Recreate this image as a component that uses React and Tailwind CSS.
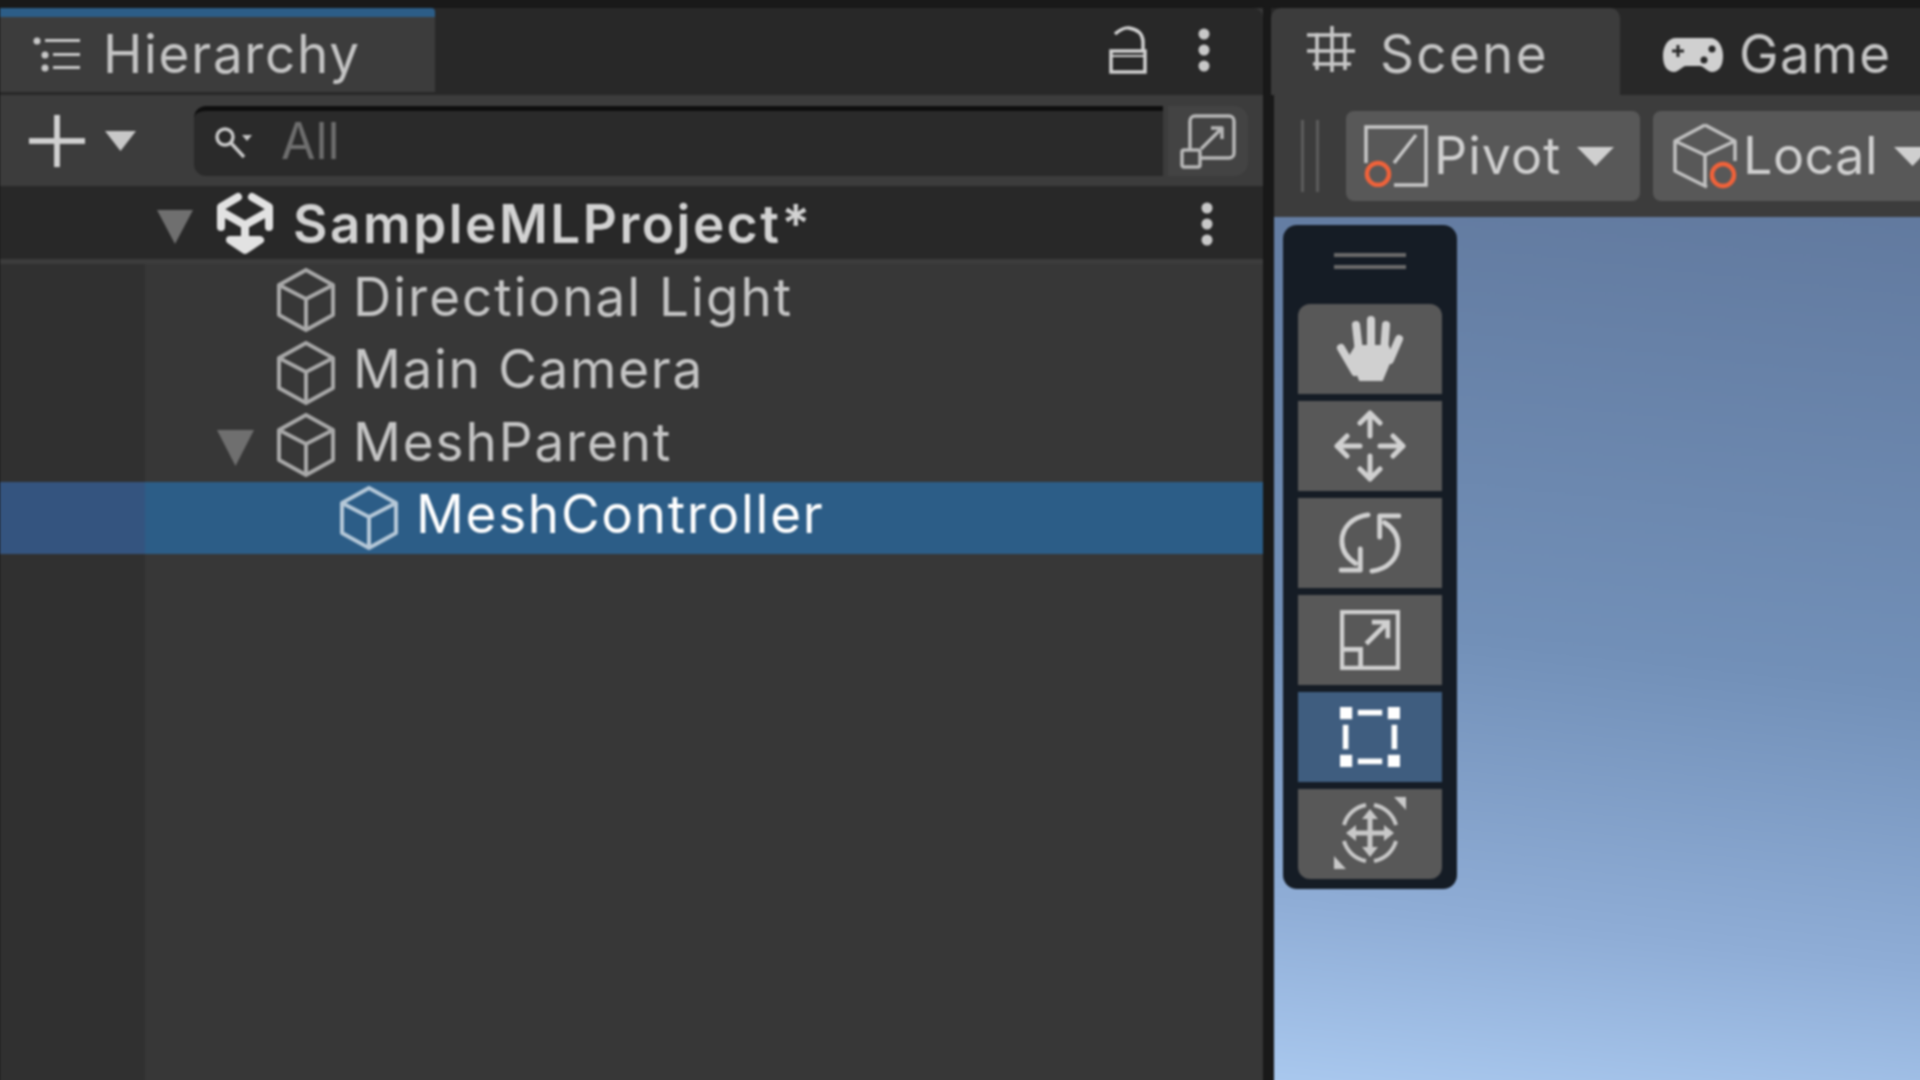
import React from "react";

const font = { fontFamily: "Inter, 'Noto Sans', sans-serif" };

const Triangle = ({ className }) => (
  <svg viewBox="0 0 30 28" preserveAspectRatio="none" className={className} fill="currentColor">
    <path d="M0 0H30L15 28Z" />
  </svg>
);

const Kebab = ({ className }) => (
  <svg viewBox="0 0 14 44" className={className} fill="#c8c8c8">
    <circle cx="7" cy="6" r="5.5" />
    <circle cx="7" cy="22" r="5.5" />
    <circle cx="7" cy="38" r="5.5" />
  </svg>
);

const Cube = ({ stroke = "#a8a8a8" }) => (
  <svg viewBox="0 0 60 64" className="w-[60px] h-[64px] shrink-0" fill="none" stroke={stroke} strokeWidth="4" strokeLinejoin="round">
    <path d="M30 2L57 17V47L30 62L3 47V17Z" />
    <path d="M3 17L30 31L57 17M30 31V62" />
  </svg>
);

const UnityLogo = () => (
  <svg viewBox="12 6 56 64" className="w-[56px] h-[64px]" fill="none" stroke="#e2e2e2" strokeWidth="8" strokeLinejoin="round" strokeLinecap="round">
    <path d="M33 11L16 21V41" />
    <path d="M47 11L64 21V41" />
    <path d="M19 27L40 39L61 27" />
    <path d="M40 39V62" />
    <path d="M25 54L40 64L55 54Z" fill="#e2e2e2" />
  </svg>
);

const Row = ({ label, pad, arrow, selected, spacing = "tracking-[1.7px]" }) => (
  <div className={`flex h-[72.5px] ${selected ? "bg-[#2c5d87]" : "bg-[#373737]"}`}>
    <div className={`w-[145px] shrink-0 ${selected ? "bg-[#34547f]" : "bg-[#303030]"}`} />
    <div className={`flex items-center ${pad}`}>
      {arrow && <Triangle className="w-[37px] h-[36px] mr-[22px] mt-[6px] text-[#6f6f6f]" />}
      <Cube stroke={selected ? "#b5c8d8" : "#a8a8a8"} />
      <span className={`ml-[17px] mb-[6px] text-[53px] ${spacing} ${selected ? "text-white" : "text-[#c4c4c4]"}`}>{label}</span>
    </div>
  </div>
);

const ToolButton = ({ children, active, first, last }) => (
  <div
    className={`h-[90px] flex items-center justify-center ${active ? "bg-[#3f5d7f]" : "bg-[#585858]"} ${first ? "rounded-t-[12px]" : ""} ${last ? "rounded-b-[12px]" : ""}`}
  >
    {children}
  </div>
);

const toolIcon = { fill: "none", stroke: "#d0d0d0", strokeWidth: 5, strokeLinecap: "round", strokeLinejoin: "round" };

export default function App() {
  return (
    <div className="w-[1920px] h-[1080px] overflow-hidden bg-[#191919]">
      {/* soft upscaled look, oversized so the blur doesn't fade at the right and bottom edges */}
      <div className="w-[1928px] h-[1088px] pt-2 flex gap-2 text-[#c4c4c4] blur-[1px]" style={font}>
        {/* Hierarchy panel */}
        <div className="w-[1263px] shrink-0 flex flex-col bg-[#373737]">
          <div className="h-[87px] shrink-0 flex items-start bg-[#282828] rounded-tr-[10px]">
            <div className="w-[435px] h-[84px] bg-[#3c3c3c] border-t-[9px] border-[#2c5d87] flex items-center pl-[33px] rounded-tr-[4px]">
              <svg viewBox="0 0 48 36" className="w-[48px] h-[36px]" fill="#c8c8c8">
                <circle cx="4" cy="4" r="3.5" />
                <circle cx="12" cy="18" r="3.5" />
                <circle cx="12" cy="31" r="3.5" />
                <rect x="12" y="2" width="35" height="3" />
                <rect x="20" y="16" width="27" height="3" />
                <rect x="20" y="29" width="27" height="3" />
              </svg>
              <span className="ml-[22px] text-[53px] tracking-[1.7px]">Hierarchy</span>
            </div>
            <div className="ml-auto h-[84px] flex items-center pr-[52px] gap-[50px]">
              <svg viewBox="0 0 38 48" className="w-[38px] h-[48px]" fill="none" stroke="#d0d0d0" strokeWidth="3.5">
                <rect x="2" y="25" width="34" height="21" />
                <path d="M2 30H36" strokeWidth="2" />
                <path d="M6 8Q14 1 20 2Q33 4 34 15V25" />
              </svg>
              <Kebab className="w-[14px] h-[44px]" />
            </div>
          </div>

          <div className="h-[91px] shrink-0 bg-[#3c3c3c] flex items-center">
            <div className="flex items-center pl-[29px] w-[194px] shrink-0">
              <svg viewBox="0 0 58 54" className="w-[56px] h-[54px]" fill="#d0d0d0">
                <rect x="0" y="24" width="58" height="6" />
                <rect x="26" y="0" width="6" height="54" />
              </svg>
              <Triangle className="ml-[20px] w-[31px] h-[20px] text-[#c8c8c8]" />
            </div>
            <div className="w-[969px] h-[70px] bg-[#2a2a2a] border-t-[5px] border-[#0e0e0e] rounded-l-[12px] flex items-center pl-[20px]">
              <svg viewBox="0 0 40 36" className="w-[40px] h-[36px]" fill="none" stroke="#c8c8c8" strokeWidth="3.5">
                <circle cx="11" cy="12" r="8" />
                <path d="M17 18L30 32" />
                <path d="M28 10H38L33 16Z" fill="#c8c8c8" stroke="none" />
              </svg>
              <span className="ml-[27px] mb-[3px] text-[50px] text-[#6e6e6e]">All</span>
            </div>
            <div className="ml-[5px] w-[80px] h-[70px] bg-[#434343] rounded-r-[14px] flex items-center justify-center">
              <svg viewBox="0 0 56 56" className="w-[56px] h-[56px]" fill="none" stroke="#b8b8b8" strokeWidth="3.5" strokeLinejoin="round">
                <path d="M10 36V8A5 5 0 0 1 15 3H49A5 5 0 0 1 54 8V40A5 5 0 0 1 49 45H21" />
                <rect x="2" y="37" width="18" height="17" rx="2" />
                <path d="M21 36L42 15M31 15H42V26" />
              </svg>
            </div>
          </div>

          <div className="h-[78px] shrink-0 bg-[#282828] flex items-center pt-[3px] border-b-[5px] border-[#3c3c3c]">
            <Triangle className="ml-[157px] w-[36px] h-[34px] mt-[6px] text-[#6f6f6f]" />
            <div className="ml-[24px]">
              <UnityLogo />
            </div>
            <span className="ml-[20px] mt-[2px] text-[53px] font-semibold tracking-[2.5px] text-[#d2d2d2]">SampleMLProject*</span>
            <div className="ml-auto pr-[49px] flex items-center">
              <Kebab className="w-[14px] h-[44px]" />
            </div>
          </div>

          <Row label="Directional Light" pad="pl-[131px]" spacing="tracking-[2px]" />
          <Row label="Main Camera" pad="pl-[131px]" />
          <Row label="MeshParent" pad="pl-[72px]" arrow spacing="tracking-[1.9px]" />
          <Row label="MeshController" pad="pl-[194px]" selected />

          <div className="flex-1 flex">
            <div className="w-[145px] bg-[#303030]" />
          </div>
        </div>

        {/* Scene panel */}
        <div className="flex-1 min-w-0 flex flex-col">
          <div className="h-[87px] shrink-0 flex bg-[#282828]">
            <div className="w-[349px] bg-[#3c3c3c] rounded-t-[10px] flex items-center pt-[7px] pl-[24px]">
              <svg viewBox="0 0 70 70" className="w-[70px] h-[70px]" fill="none" stroke="#c8c8c8" strokeWidth="3.5">
                <path d="M22 13V50M37 6V52M50 13V50M12 15H56M12 31H60M18 44H56" />
              </svg>
              <span className="ml-[15px] text-[53px] tracking-[2.3px]">Scene</span>
            </div>
            <div className="flex items-center pt-[7px] pl-[42px] whitespace-nowrap">
              <svg viewBox="0 0 62 38" className="w-[62px] h-[38px]">
                <path d="M14 2H48C56 2 61 10 61 20C61 31 56 36 50 36C45 36 42 30 38 30H24C20 30 17 36 12 36C6 36 1 31 1 20C1 10 6 2 14 2Z" fill="#d0d0d0" />
                <path d="M16 9V21M10 15H22" stroke="#282828" strokeWidth="3" fill="none" />
                <circle cx="42" cy="24" r="3.5" fill="#282828" />
                <circle cx="50" cy="13" r="3.5" fill="#282828" />
              </svg>
              <span className="ml-[15px] text-[53px] tracking-[1.5px]">Game</span>
            </div>
          </div>

          <div className="ml-[3px] h-[122px] shrink-0 bg-[#3c3c3c] flex items-center pl-[27px]">
            <div className="flex gap-[12px] w-[18px] h-[72px] shrink-0">
              <div className="w-[3px] bg-[#5c5c5c]" />
              <div className="w-[3px] bg-[#5c5c5c]" />
            </div>
            <div className="ml-[27px] w-[294px] h-[90px] shrink-0 bg-[#585858] rounded-[8px] flex items-center pl-[18px]">
              <svg viewBox="0 0 64 62" className="w-[64px] h-[62px] shrink-0" fill="none" stroke="#c8c8c8" strokeWidth="3.5">
                <path d="M2 38V2H62V60H30" />
                <path d="M30 38L52 10" />
                <ellipse cx="14" cy="49" rx="11" ry="11" stroke="#f0623a" strokeWidth="4.5" />
              </svg>
              <span className="ml-[6px] text-[52px] tracking-[1px] text-[#cfcfcf]">Pivot</span>
              <Triangle className="ml-[16px] w-[37px] h-[19px] text-[#cfcfcf]" />
            </div>
            <div className="ml-[13px] w-[320px] h-[90px] shrink-0 bg-[#585858] rounded-[8px] flex items-center pl-[20px]">
              <svg viewBox="0 0 64 66" className="w-[64px] h-[66px] shrink-0" fill="none" stroke="#c0c0c0" strokeWidth="3.5" strokeLinejoin="round">
                <path d="M32 2L62 18V38M34 64L2 48V18L32 2M2 18L32 32L62 18M32 32V62" />
                <ellipse cx="50" cy="52" rx="11" ry="11" stroke="#f0623a" strokeWidth="4.5" />
              </svg>
              <span className="ml-[6px] text-[52px] tracking-[0.5px] text-[#cfcfcf]">Local</span>
              <Triangle className="ml-[16px] w-[37px] h-[19px] shrink-0 text-[#cfcfcf]" />
            </div>
          </div>

          <div className="ml-[3px] relative flex-1 bg-linear-[186deg,#627a9f_0%,#7290b8_50%,#8fadd6_80%,#aac9ef_100%]">
            {/* overlay toolbar floats on the scene view */}
            <div className="absolute left-[9px] top-[8px] w-[174px] rounded-[14px] bg-[#151c25] px-[15px] pb-[10px]">
              <div className="h-[79px] pb-[8px] flex flex-col items-center justify-center gap-[8px]">
                <div className="w-[72px] h-[4px] bg-[#6a6a6a]" />
                <div className="w-[72px] h-[4px] bg-[#6a6a6a]" />
              </div>
              <div className="flex flex-col gap-[7px]">
                <ToolButton first>
                  <svg viewBox="0 0 80 90" className="w-[80px] h-[90px]" fill="#d0d0d0" stroke="#d0d0d0" strokeWidth="8" strokeLinecap="round" strokeLinejoin="round">
                    <path d="M11 44L25 68M26 21L29 48M41 16V48M56 21L54 48M69 35L60 56" />
                    <path d="M20 52L30 76H52L62 52L58 42H26Z" strokeWidth="2" />
                  </svg>
                </ToolButton>
                <ToolButton>
                  <svg viewBox="0 0 72 72" className="w-[72px] h-[72px]" {...toolIcon}>
                    <path d="M36 3V26M26 13L36 3L46 13M36 46V69M26 59L36 69L46 59M3 36H26M13 26L3 36L13 46M46 36H69M59 26L69 36L59 46" />
                  </svg>
                </ToolButton>
                <ToolButton>
                  <svg viewBox="0 0 64 64" className="w-[62px] h-[62px]" {...toolIcon}>
                    <path d="M30 3C14 5 3 16 3 30C3 40 9 48 17 53" />
                    <path d="M22 38V60H2" />
                    <path d="M34 61C50 59 61 48 61 34C61 24 55 16 47 11" />
                    <path d="M42 26V4H62" />
                  </svg>
                </ToolButton>
                <ToolButton>
                  <svg viewBox="0 0 64 64" className="w-[60px] h-[60px]" {...toolIcon} strokeLinecap="butt" strokeLinejoin="miter">
                    <rect x="2" y="2" width="60" height="60" />
                    <path d="M2 42H22V62" />
                    <path d="M28 36L50 14M34 13H51V30" />
                  </svg>
                </ToolButton>
                <ToolButton active>
                  <svg viewBox="0 0 64 64" className="w-[60px] h-[60px]" fill="#ffffff">
                    <rect x="0" y="0" width="13" height="13" />
                    <rect x="51" y="0" width="13" height="13" />
                    <rect x="0" y="51" width="13" height="13" />
                    <rect x="51" y="51" width="13" height="13" />
                    <rect x="19" y="3" width="26" height="6" />
                    <rect x="19" y="55" width="26" height="6" />
                    <rect x="3" y="19" width="6" height="26" />
                    <rect x="55" y="19" width="6" height="26" />
                  </svg>
                </ToolButton>
                <ToolButton last>
                  <svg viewBox="0 0 76 76" className="w-[76px] h-[76px] -mt-[3px]" fill="none" stroke="#c8c8c8" strokeWidth="4">
                    <path d="M12 30A28 28 0 0 1 34 10M42 10A28 28 0 0 1 64 30M64 46A28 28 0 0 1 42 66M34 66A28 28 0 0 1 12 46" />
                    <path d="M38 18V58M18 38H58" strokeWidth="5" />
                    <path d="M38 14L46 24H30ZM38 62L46 52H30ZM14 38L24 30V46ZM62 38L52 30V46Z" fill="#c8c8c8" stroke="none" />
                    <path d="M62 2H74V15ZM2 74V61L14 74Z" fill="#c8c8c8" stroke="none" />
                  </svg>
                </ToolButton>
              </div>
            </div>
          </div>
        </div>
      </div>
    </div>
  );
}
